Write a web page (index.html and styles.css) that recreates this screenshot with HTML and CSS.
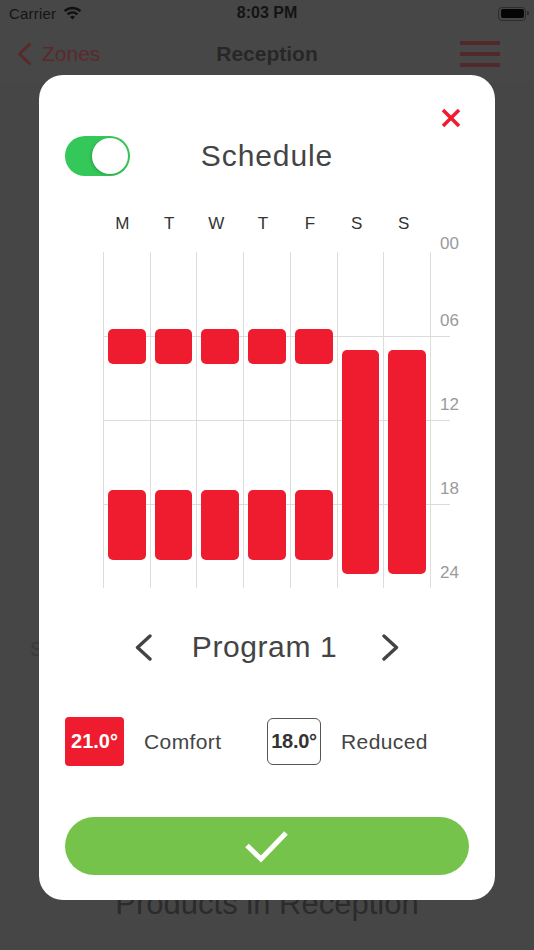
FILE: index.html
```html
<!DOCTYPE html>
<html lang="en">
<head>
<meta charset="utf-8">
<title>Reception – Schedule</title>
<link rel="stylesheet" href="styles.css">
</head>
<body>
<div class="page">
  <div class="statusbar">
    <div class="sb-left">
      <span class="carrier">Carrier</span>
      <svg class="wifi" width="19" height="14" viewBox="0 0 19 14">
        <path d="M1.6 5.2 A11.3 11.3 0 0 1 17.4 5.2" fill="none" stroke="#111" stroke-width="2.4"/>
        <path d="M4.6 8.4 A6.9 6.9 0 0 1 14.4 8.4" fill="none" stroke="#111" stroke-width="2.4"/>
        <path d="M9.5 13.6 L7 11.1 A3.5 3.5 0 0 1 12 11.1 Z" fill="#111"/>
      </svg>
    </div>
    <span class="clock">8:03 PM</span>
    <div class="battery"><span class="battery-fill"></span></div>
  </div>
  <div class="navbar">
    <div class="nav-back">
      <svg width="14" height="22" viewBox="0 0 14 22"><polyline points="12.5,1.5 2.5,11 12.5,20.5" fill="none" stroke="#5a2a2b" stroke-width="3" stroke-linecap="round" stroke-linejoin="round"/></svg>
      <span>Zones</span>
    </div>
    <div class="nav-title">Reception</div>
    <div class="hamburger"><span></span><span></span><span></span></div>
  </div>
  <div class="content">
    <div class="bg-label">Schedule</div>
    <div class="bg-heading">Products in Reception</div>
  </div>
</div>

<div class="modal">
  <div class="close-row">
    <svg class="close" width="20" height="20" viewBox="0 0 20 20">
      <line x1="2" y1="2" x2="18" y2="18" stroke="#ee1c2e" stroke-width="3.6"/>
      <line x1="18" y1="2" x2="2" y2="18" stroke="#ee1c2e" stroke-width="3.6"/>
    </svg>
  </div>
  <div class="header">
    <div class="toggle"><span class="knob"></span></div>
    <div class="title">Schedule</div>
  </div>
  <div class="days">
    <span>M</span><span>T</span><span>W</span><span>T</span><span>F</span><span>S</span><span>S</span>
  </div>
  <div class="chart">
    <div class="plot-area">
      <div class="plot">
        <div class="day"><div class="bar morning"></div><div class="bar evening"></div></div>
        <div class="day"><div class="bar morning"></div><div class="bar evening"></div></div>
        <div class="day"><div class="bar morning"></div><div class="bar evening"></div></div>
        <div class="day"><div class="bar morning"></div><div class="bar evening"></div></div>
        <div class="day"><div class="bar morning"></div><div class="bar evening"></div></div>
        <div class="day"><div class="bar weekend"></div></div>
        <div class="day"><div class="bar weekend"></div></div>
      </div>
    </div>
    <div class="hours">
      <span>00</span><span>06</span><span>12</span><span>18</span><span>24</span>
    </div>
  </div>
  <div class="program">
    <svg class="chev" width="17" height="27" viewBox="0 0 17 27"><polyline points="15,2 2.5,13.5 15,25" fill="none" stroke="#444" stroke-width="3.4" stroke-linecap="round" stroke-linejoin="round"/></svg>
    <span class="program-name">Program 1</span>
    <svg class="chev" width="17" height="27" viewBox="0 0 17 27"><polyline points="2,2 14.5,13.5 2,25" fill="none" stroke="#444" stroke-width="3.4" stroke-linecap="round" stroke-linejoin="round"/></svg>
  </div>
  <div class="temps">
    <div class="temp temp-comfort">
      <span class="badge badge-red">21.0°</span>
      <span class="temp-label">Comfort</span>
    </div>
    <div class="temp">
      <span class="badge badge-outline">18.0°</span>
      <span class="temp-label">Reduced</span>
    </div>
  </div>
  <button class="confirm">
    <svg width="46" height="36" viewBox="0 0 46 36"><polyline points="3,17.5 17,31 42,5" fill="none" stroke="#fff" stroke-width="5"/></svg>
  </button>
</div>
</body>
</html>
```
FILE: styles.css
```css
* { box-sizing: border-box; }
html, body {
  margin: 0;
  padding: 0;
}
body {
  width: 534px;
  height: 950px;
  overflow: hidden;
  background: #464646;
  font-family: "Liberation Sans", Arial, sans-serif;
  position: relative;
}

/* ---------- dimmed page behind the modal ---------- */
.page { width: 534px; height: 950px; }

.statusbar {
  height: 26px;
  display: flex;
  align-items: center;
  justify-content: space-between;
  padding: 0 8px 0 9px;
  background: #474747;
  position: relative;
}
.sb-left { display: flex; align-items: center; gap: 7px; width: 120px; }
.carrier { font-size: 15px; color: #141414; letter-spacing: 0.2px; }
.wifi { margin-top: -1px; }
.clock {
  font-size: 16px;
  font-weight: bold;
  color: #141414;
  position: absolute;
  left: 0;
  right: 0;
  text-align: center;
  top: 5px;
  line-height: 16px;
}
.battery {
  width: 28px;
  height: 14px;
  border: 1.5px solid #2d2d2d;
  border-radius: 4px;
  padding: 1.5px;
  margin-top: 1px;
  position: relative;
}
.battery::after {
  content: "";
  position: absolute;
  right: -4px;
  top: 3.5px;
  width: 2px;
  height: 4px;
  background: #2d2d2d;
  border-radius: 0 1px 1px 0;
}
.battery-fill {
  display: block;
  width: 100%;
  height: 100%;
  background: #050505;
  border-radius: 2px;
}

.navbar {
  height: 56px;
  display: flex;
  align-items: center;
  justify-content: space-between;
  padding: 0 34px 0 17px;
  background: #474747;
  position: relative;
}
.nav-back { display: flex; align-items: center; gap: 11px; }
.nav-back span { font-size: 21px; color: #5a2a2b; }
.nav-title {
  position: absolute;
  left: 0;
  right: 0;
  text-align: center;
  font-size: 21px;
  font-weight: bold;
  color: #272727;
  pointer-events: none;
}
.hamburger { display: flex; flex-direction: column; gap: 7.5px; width: 40px; }
.hamburger span { display: block; height: 3.5px; background: #52292a; }

.content { padding: 0; }
.bg-label {
  margin: 555px 0 0 30px;
  font-size: 20px;
  line-height: 24px;
  color: #3a3a3a;
}
.bg-heading {
  margin-top: 225px;
  text-align: center;
  font-size: 31px;
  line-height: 36px;
  color: #2b2b2b;
}

/* ---------- modal ---------- */
.modal {
  position: absolute;
  top: 75px;
  left: 39px;
  width: 456px;
  background: #fff;
  border-radius: 24px;
  padding: 33px 26px 25px;
}

.close-row {
  height: 20px;
  display: flex;
  justify-content: flex-end;
  padding-right: 8px;
}
.close { display: block; }

.header {
  margin-top: 8px;
  height: 40px;
  display: grid;
  grid-template-columns: 1fr auto 1fr;
  align-items: center;
}
.toggle {
  width: 65px;
  height: 40px;
  border-radius: 20px;
  background: #34c759;
  padding: 2px;
  display: flex;
  justify-content: flex-end;
}
.knob {
  width: 36px;
  height: 36px;
  border-radius: 50%;
  background: #fff;
  box-shadow: -1px 1px 3px rgba(0, 0, 0, 0.18);
}
.title {
  font-size: 30px;
  line-height: 40px;
  color: #444;
  letter-spacing: 0.9px;
}

.days {
  margin: 38px 0 0 34px;
  width: 328px;
  height: 20px;
  display: flex;
}
.days span {
  flex: 1;
  text-align: center;
  font-size: 17px;
  line-height: 20px;
  color: #333;
}

.chart {
  margin-top: 18px;
  display: flex;
}
.plot-area {
  margin-left: 38px;
  width: 347px;
  height: 336px;
  flex: none;
  background:
    linear-gradient(#dcdcdc, #dcdcdc) 0 84px / 100% 1px no-repeat,
    linear-gradient(#dcdcdc, #dcdcdc) 0 168px / 100% 1px no-repeat,
    linear-gradient(#dcdcdc, #dcdcdc) 0 252px / 100% 1px no-repeat;
}
.plot {
  width: 328px;
  height: 336px;
  display: flex;
}
.day {
  flex: 1;
  border-left: 1px solid #dcdcdc;
  padding: 0 4px;
  display: grid;
  grid-template-rows: repeat(48, 7px);
}
.day:last-child { border-right: 1px solid #dcdcdc; }
.bar {
  background: #ee1c2e;
  border-radius: 5px;
  grid-column: 1;
}
.morning { grid-row: 12 / 17; }
.evening { grid-row: 35 / 45; }
.weekend { grid-row: 15 / 47; }

.hours {
  margin: -17px 0 0 -10px;
  display: flex;
  flex-direction: column;
  gap: 66px;
}
.hours span {
  font-size: 17px;
  line-height: 18px;
  color: #9a9a9a;
}
.hours span:first-child { margin-bottom: -7px; }

.program {
  margin-top: 44px;
  height: 30px;
  display: flex;
  justify-content: center;
  align-items: center;
}
.chev { display: block; flex: none; }
.program-name {
  width: 147px;
  margin: 0 44px 0 39px;
  text-align: center;
  font-size: 30px;
  line-height: 30px;
  color: #444;
  letter-spacing: 0.6px;
  white-space: nowrap;
}

.temps {
  margin-top: 55px;
  height: 49px;
  display: flex;
  align-items: center;
}
.temp {
  display: flex;
  align-items: center;
  gap: 20px;
}
.temp-comfort { width: 202px; }
.badge {
  display: flex;
  align-items: center;
  justify-content: center;
  font-weight: bold;
  font-size: 20px;
  white-space: nowrap;
}
.badge-red {
  width: 59px;
  height: 49px;
  border-radius: 4px;
  background: #ee1c2e;
  color: #fff;
}
.badge-outline {
  width: 54px;
  height: 47px;
  border: 1.3px solid #555;
  border-radius: 6px;
  color: #333;
  letter-spacing: -0.3px;
}
.temp-label {
  font-size: 21px;
  color: #444;
  letter-spacing: 0.4px;
}

.confirm {
  margin-top: 51px;
  width: 404px;
  height: 58px;
  border: none;
  border-radius: 29px;
  background: #76c34b;
  display: flex;
  align-items: center;
  justify-content: center;
  padding: 0;
}
.confirm svg { display: block; }
```
